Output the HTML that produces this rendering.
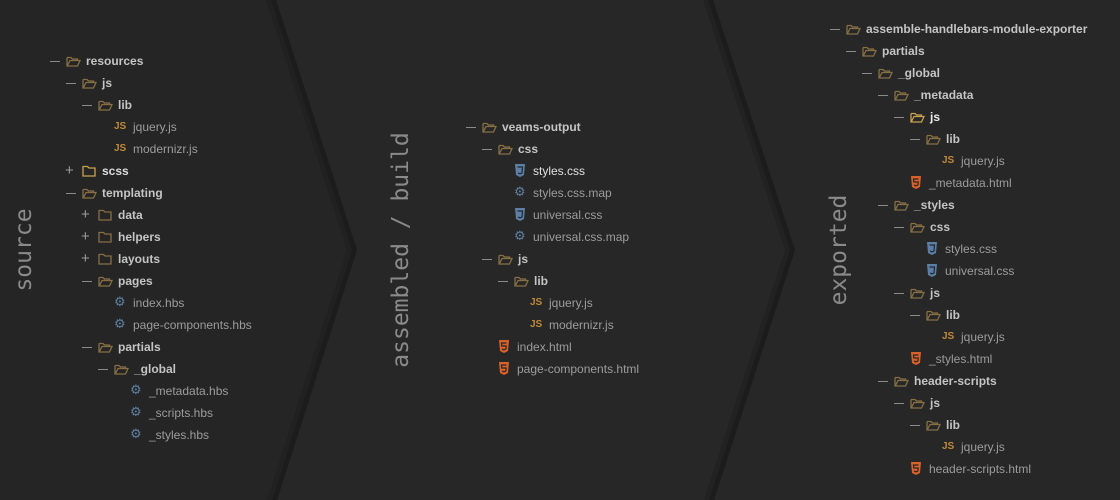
<!DOCTYPE html>
<html><head><meta charset="utf-8"><style>
html,body{margin:0;padding:0;background:#272727;width:1120px;height:500px;overflow:hidden;position:relative}
svg.bg{position:absolute;left:0;top:0}
.r{position:absolute;height:22px;line-height:22px;font-family:"Liberation Sans",sans-serif;font-size:12px;white-space:nowrap;color:#9a9a9a}
.r svg{position:absolute;left:0;top:5px}
.r b{position:absolute;left:20px;color:#c4c4c4;font-weight:bold}
.r span{position:absolute;left:19px;color:#9c9c9c}
.r.o::before{content:"";position:absolute;left:-16px;top:11px;width:10px;height:1px;background:#8a8a8a}
.r.c::before{content:"+";position:absolute;left:-17px;top:0;font-size:15px;color:#9a9a9a;font-weight:normal}
.js{position:absolute;left:0;top:0;font-weight:bold;font-size:10px;color:#c0893a;font-style:normal}
.g{position:absolute;left:0;top:0;font-size:13px;color:#5f7fa3;font-family:"DejaVu Sans",sans-serif;font-style:normal}
.lbl{position:absolute;font-family:"DejaVu Sans Mono",monospace;font-size:23px;color:#8a8a8a;transform:translate(-50%,-50%) rotate(-90deg);white-space:nowrap}
</style></head><body>
<svg class="bg" width="1120" height="500">
<rect width="1120" height="500" fill="#272727"/>
<polygon points="0,0 276,0 357,250 277,500 0,500" fill="#252525"/>
<polygon points="266,0 276,0 357,250 277,500 267,500 347,250" fill="#212121"/>
<polygon points="271,0 276,0 357,250 277,500 272,500 352,250" fill="#1c1c1c"/>
<polygon points="703,0 713,0 795,250 714,500 704,500 785,250" fill="#222222"/>
<polygon points="708,0 713,0 795,250 714,500 709,500 790,250" fill="#1c1c1c"/>
</svg>

<div class="lbl" style="left:24px;top:250px">source</div>
<div class="lbl" style="left:401px;top:250px">assembled / build</div>
<div class="lbl" style="left:839px;top:250px">exported</div>

<!-- LEFT -->
<div class="r o" style="left:66px;top:50px"><svg width="15" height="12"><path d="M1 2.5V11h10.5l2.5-5.5H4L1.2 11M1 2.5h4l1.5 1.5h5v1.5" fill="none" stroke="#866f45" stroke-width="1.3"/></svg><b>resources</b></div>
<div class="r o" style="left:82px;top:72px"><svg width="15" height="12"><path d="M1 2.5V11h10.5l2.5-5.5H4L1.2 11M1 2.5h4l1.5 1.5h5v1.5" fill="none" stroke="#866f45" stroke-width="1.3"/></svg><b>js</b></div>
<div class="r o" style="left:98px;top:94px"><svg width="15" height="12"><path d="M1 2.5V11h10.5l2.5-5.5H4L1.2 11M1 2.5h4l1.5 1.5h5v1.5" fill="none" stroke="#866f45" stroke-width="1.3"/></svg><b>lib</b></div>
<div class="r" style="left:114px;top:116px"><i class="js">JS</i><span>jquery.js</span></div>
<div class="r" style="left:114px;top:138px"><i class="js">JS</i><span>modernizr.js</span></div>
<div class="r c" style="left:82px;top:160px"><svg width="15" height="12"><path d="M1 1.5h4.5l1.5 1.5h6v8H1z" fill="none" stroke="#c9a24f" stroke-width="1.3"/></svg><b style="color:#dcdcdc">scss</b></div>
<div class="r o" style="left:82px;top:182px"><svg width="15" height="12"><path d="M1 2.5V11h10.5l2.5-5.5H4L1.2 11M1 2.5h4l1.5 1.5h5v1.5" fill="none" stroke="#866f45" stroke-width="1.3"/></svg><b>templating</b></div>
<div class="r c" style="left:98px;top:204px"><svg width="15" height="12"><path d="M1 1.5h4.5l1.5 1.5h6v8H1z" fill="none" stroke="#866f45" stroke-width="1.3"/></svg><b>data</b></div>
<div class="r c" style="left:98px;top:226px"><svg width="15" height="12"><path d="M1 1.5h4.5l1.5 1.5h6v8H1z" fill="none" stroke="#866f45" stroke-width="1.3"/></svg><b>helpers</b></div>
<div class="r c" style="left:98px;top:248px"><svg width="15" height="12"><path d="M1 1.5h4.5l1.5 1.5h6v8H1z" fill="none" stroke="#866f45" stroke-width="1.3"/></svg><b>layouts</b></div>
<div class="r o" style="left:98px;top:270px"><svg width="15" height="12"><path d="M1 2.5V11h10.5l2.5-5.5H4L1.2 11M1 2.5h4l1.5 1.5h5v1.5" fill="none" stroke="#866f45" stroke-width="1.3"/></svg><b>pages</b></div>
<div class="r" style="left:114px;top:292px"><i class="g">⚙</i><span>index.hbs</span></div>
<div class="r" style="left:114px;top:314px"><i class="g">⚙</i><span>page-components.hbs</span></div>
<div class="r o" style="left:98px;top:336px"><svg width="15" height="12"><path d="M1 2.5V11h10.5l2.5-5.5H4L1.2 11M1 2.5h4l1.5 1.5h5v1.5" fill="none" stroke="#866f45" stroke-width="1.3"/></svg><b>partials</b></div>
<div class="r o" style="left:114px;top:358px"><svg width="15" height="12"><path d="M1 2.5V11h10.5l2.5-5.5H4L1.2 11M1 2.5h4l1.5 1.5h5v1.5" fill="none" stroke="#866f45" stroke-width="1.3"/></svg><b>_global</b></div>
<div class="r" style="left:130px;top:380px"><i class="g">⚙</i><span>_metadata.hbs</span></div>
<div class="r" style="left:130px;top:402px"><i class="g">⚙</i><span>_scripts.hbs</span></div>
<div class="r" style="left:130px;top:424px"><i class="g">⚙</i><span>_styles.hbs</span></div>

<!-- MIDDLE -->
<div class="r o" style="left:482px;top:116px"><svg width="15" height="12"><path d="M1 2.5V11h10.5l2.5-5.5H4L1.2 11M1 2.5h4l1.5 1.5h5v1.5" fill="none" stroke="#866f45" stroke-width="1.3"/></svg><b>veams-output</b></div>
<div class="r o" style="left:498px;top:138px"><svg width="15" height="12"><path d="M1 2.5V11h10.5l2.5-5.5H4L1.2 11M1 2.5h4l1.5 1.5h5v1.5" fill="none" stroke="#866f45" stroke-width="1.3"/></svg><b>css</b></div>
<div class="r" style="left:514px;top:160px"><svg width="12" height="13" style="top:4px"><path d="M1 0h10l-1 11-4 2-4-2z" fill="#5b7fa6"/><path d="M3.5 3h5l-.5 6-2 .8-2-.8" fill="none" stroke="#262626" stroke-width="1.2"/></svg><span style="color:#e0e0e0">styles.css</span></div>
<div class="r" style="left:514px;top:182px"><i class="g">⚙</i><span>styles.css.map</span></div>
<div class="r" style="left:514px;top:204px"><svg width="12" height="13" style="top:4px"><path d="M1 0h10l-1 11-4 2-4-2z" fill="#5b7fa6"/><path d="M3.5 3h5l-.5 6-2 .8-2-.8" fill="none" stroke="#262626" stroke-width="1.2"/></svg><span>universal.css</span></div>
<div class="r" style="left:514px;top:226px"><i class="g">⚙</i><span>universal.css.map</span></div>
<div class="r o" style="left:498px;top:248px"><svg width="15" height="12"><path d="M1 2.5V11h10.5l2.5-5.5H4L1.2 11M1 2.5h4l1.5 1.5h5v1.5" fill="none" stroke="#866f45" stroke-width="1.3"/></svg><b>js</b></div>
<div class="r o" style="left:514px;top:270px"><svg width="15" height="12"><path d="M1 2.5V11h10.5l2.5-5.5H4L1.2 11M1 2.5h4l1.5 1.5h5v1.5" fill="none" stroke="#866f45" stroke-width="1.3"/></svg><b>lib</b></div>
<div class="r" style="left:530px;top:292px"><i class="js">JS</i><span>jquery.js</span></div>
<div class="r" style="left:530px;top:314px"><i class="js">JS</i><span>modernizr.js</span></div>
<div class="r" style="left:498px;top:336px"><svg width="12" height="13" style="top:4px"><path d="M1 0h10l-1 11-4 2-4-2z" fill="#d9612a"/><path d="M8.5 3h-5l.3 3h4.4l-.3 3-2 .8-2-.8" fill="none" stroke="#262626" stroke-width="1.2"/></svg><span>index.html</span></div>
<div class="r" style="left:498px;top:358px"><svg width="12" height="13" style="top:4px"><path d="M1 0h10l-1 11-4 2-4-2z" fill="#d9612a"/><path d="M8.5 3h-5l.3 3h4.4l-.3 3-2 .8-2-.8" fill="none" stroke="#262626" stroke-width="1.2"/></svg><span>page-components.html</span></div>

<!-- RIGHT -->
<div class="r o" style="left:846px;top:18px"><svg width="15" height="12"><path d="M1 2.5V11h10.5l2.5-5.5H4L1.2 11M1 2.5h4l1.5 1.5h5v1.5" fill="none" stroke="#866f45" stroke-width="1.3"/></svg><b>assemble-handlebars-module-exporter</b></div>
<div class="r o" style="left:862px;top:40px"><svg width="15" height="12"><path d="M1 2.5V11h10.5l2.5-5.5H4L1.2 11M1 2.5h4l1.5 1.5h5v1.5" fill="none" stroke="#866f45" stroke-width="1.3"/></svg><b>partials</b></div>
<div class="r o" style="left:878px;top:62px"><svg width="15" height="12"><path d="M1 2.5V11h10.5l2.5-5.5H4L1.2 11M1 2.5h4l1.5 1.5h5v1.5" fill="none" stroke="#866f45" stroke-width="1.3"/></svg><b>_global</b></div>
<div class="r o" style="left:894px;top:84px"><svg width="15" height="12"><path d="M1 2.5V11h10.5l2.5-5.5H4L1.2 11M1 2.5h4l1.5 1.5h5v1.5" fill="none" stroke="#866f45" stroke-width="1.3"/></svg><b>_metadata</b></div>
<div class="r o" style="left:910px;top:106px"><svg width="15" height="12"><path d="M1 2.5V11h10.5l2.5-5.5H4L1.2 11M1 2.5h4l1.5 1.5h5v1.5" fill="none" stroke="#c9a24f" stroke-width="1.3"/></svg><b style="color:#ececec">js</b></div>
<div class="r o" style="left:926px;top:128px"><svg width="15" height="12"><path d="M1 2.5V11h10.5l2.5-5.5H4L1.2 11M1 2.5h4l1.5 1.5h5v1.5" fill="none" stroke="#866f45" stroke-width="1.3"/></svg><b>lib</b></div>
<div class="r" style="left:942px;top:150px"><i class="js">JS</i><span>jquery.js</span></div>
<div class="r" style="left:910px;top:172px"><svg width="12" height="13" style="top:4px"><path d="M1 0h10l-1 11-4 2-4-2z" fill="#d9612a"/><path d="M8.5 3h-5l.3 3h4.4l-.3 3-2 .8-2-.8" fill="none" stroke="#262626" stroke-width="1.2"/></svg><span>_metadata.html</span></div>
<div class="r o" style="left:894px;top:194px"><svg width="15" height="12"><path d="M1 2.5V11h10.5l2.5-5.5H4L1.2 11M1 2.5h4l1.5 1.5h5v1.5" fill="none" stroke="#866f45" stroke-width="1.3"/></svg><b>_styles</b></div>
<div class="r o" style="left:910px;top:216px"><svg width="15" height="12"><path d="M1 2.5V11h10.5l2.5-5.5H4L1.2 11M1 2.5h4l1.5 1.5h5v1.5" fill="none" stroke="#866f45" stroke-width="1.3"/></svg><b>css</b></div>
<div class="r" style="left:926px;top:238px"><svg width="12" height="13" style="top:4px"><path d="M1 0h10l-1 11-4 2-4-2z" fill="#5b7fa6"/><path d="M3.5 3h5l-.5 6-2 .8-2-.8" fill="none" stroke="#262626" stroke-width="1.2"/></svg><span>styles.css</span></div>
<div class="r" style="left:926px;top:260px"><svg width="12" height="13" style="top:4px"><path d="M1 0h10l-1 11-4 2-4-2z" fill="#5b7fa6"/><path d="M3.5 3h5l-.5 6-2 .8-2-.8" fill="none" stroke="#262626" stroke-width="1.2"/></svg><span>universal.css</span></div>
<div class="r o" style="left:910px;top:282px"><svg width="15" height="12"><path d="M1 2.5V11h10.5l2.5-5.5H4L1.2 11M1 2.5h4l1.5 1.5h5v1.5" fill="none" stroke="#866f45" stroke-width="1.3"/></svg><b>js</b></div>
<div class="r o" style="left:926px;top:304px"><svg width="15" height="12"><path d="M1 2.5V11h10.5l2.5-5.5H4L1.2 11M1 2.5h4l1.5 1.5h5v1.5" fill="none" stroke="#866f45" stroke-width="1.3"/></svg><b>lib</b></div>
<div class="r" style="left:942px;top:326px"><i class="js">JS</i><span>jquery.js</span></div>
<div class="r" style="left:910px;top:348px"><svg width="12" height="13" style="top:4px"><path d="M1 0h10l-1 11-4 2-4-2z" fill="#d9612a"/><path d="M8.5 3h-5l.3 3h4.4l-.3 3-2 .8-2-.8" fill="none" stroke="#262626" stroke-width="1.2"/></svg><span>_styles.html</span></div>
<div class="r o" style="left:894px;top:370px"><svg width="15" height="12"><path d="M1 2.5V11h10.5l2.5-5.5H4L1.2 11M1 2.5h4l1.5 1.5h5v1.5" fill="none" stroke="#866f45" stroke-width="1.3"/></svg><b>header-scripts</b></div>
<div class="r o" style="left:910px;top:392px"><svg width="15" height="12"><path d="M1 2.5V11h10.5l2.5-5.5H4L1.2 11M1 2.5h4l1.5 1.5h5v1.5" fill="none" stroke="#866f45" stroke-width="1.3"/></svg><b>js</b></div>
<div class="r o" style="left:926px;top:414px"><svg width="15" height="12"><path d="M1 2.5V11h10.5l2.5-5.5H4L1.2 11M1 2.5h4l1.5 1.5h5v1.5" fill="none" stroke="#866f45" stroke-width="1.3"/></svg><b>lib</b></div>
<div class="r" style="left:942px;top:436px"><i class="js">JS</i><span>jquery.js</span></div>
<div class="r" style="left:910px;top:458px"><svg width="12" height="13" style="top:4px"><path d="M1 0h10l-1 11-4 2-4-2z" fill="#d9612a"/><path d="M8.5 3h-5l.3 3h4.4l-.3 3-2 .8-2-.8" fill="none" stroke="#262626" stroke-width="1.2"/></svg><span>header-scripts.html</span></div>
</body></html>
